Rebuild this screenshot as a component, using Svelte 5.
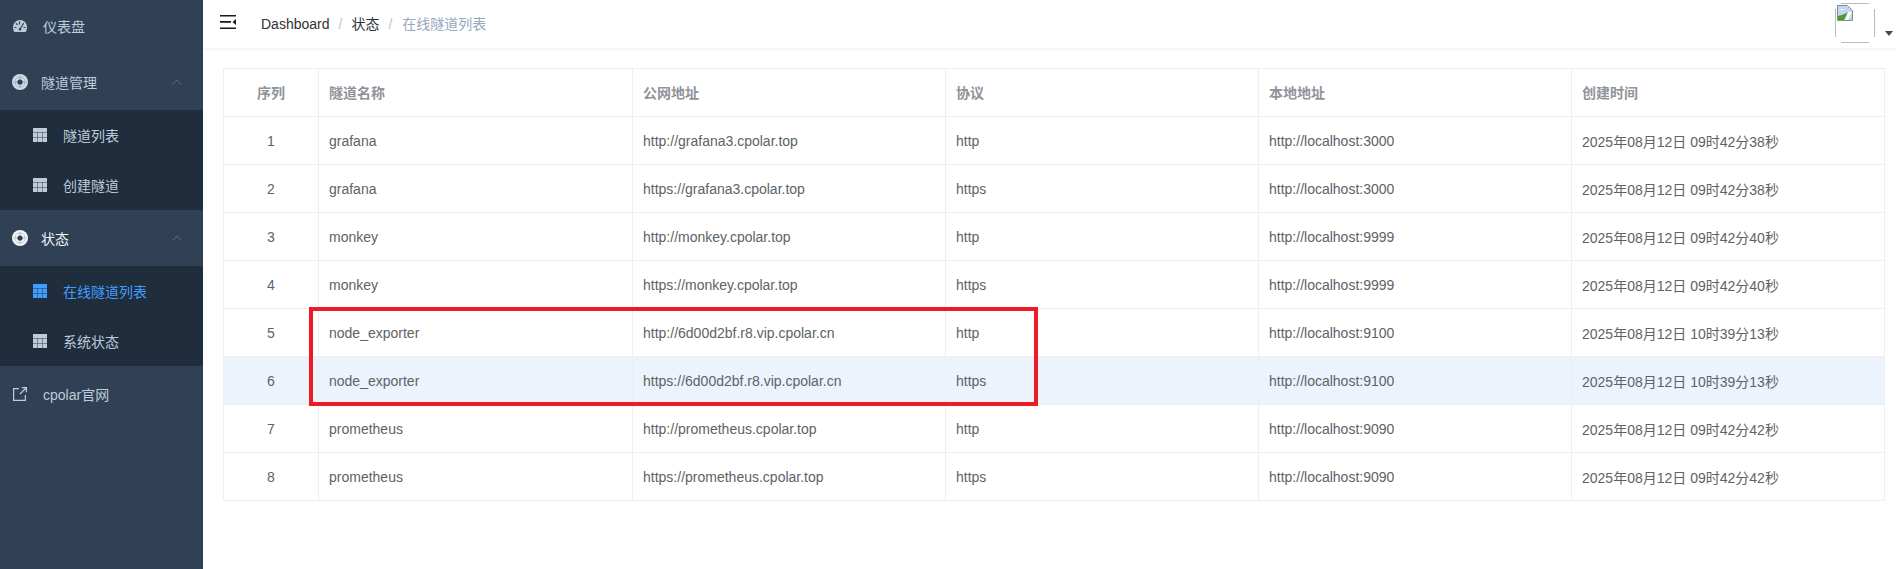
<script lang="ts">
	const rows = [
		['1', 'grafana', 'http://grafana3.cpolar.top', 'http', 'http://localhost:3000', '2025年08月12日 09时42分38秒'],
		['2', 'grafana', 'https://grafana3.cpolar.top', 'https', 'http://localhost:3000', '2025年08月12日 09时42分38秒'],
		['3', 'monkey', 'http://monkey.cpolar.top', 'http', 'http://localhost:9999', '2025年08月12日 09时42分40秒'],
		['4', 'monkey', 'https://monkey.cpolar.top', 'https', 'http://localhost:9999', '2025年08月12日 09时42分40秒'],
		['5', 'node_exporter', 'http://6d00d2bf.r8.vip.cpolar.cn', 'http', 'http://localhost:9100', '2025年08月12日 10时39分13秒'],
		['6', 'node_exporter', 'https://6d00d2bf.r8.vip.cpolar.cn', 'https', 'http://localhost:9100', '2025年08月12日 10时39分13秒'],
		['7', 'prometheus', 'http://prometheus.cpolar.top', 'http', 'http://localhost:9090', '2025年08月12日 09时42分42秒'],
		['8', 'prometheus', 'https://prometheus.cpolar.top', 'https', 'http://localhost:9090', '2025年08月12日 09时42分42秒']
	];
	const headers = ['隧道名称', '公网地址', '协议', '本地地址', '创建时间'];
</script>

{#snippet gridIcon()}
	<svg class="grid-icon" viewBox="0 0 14 14" width="14" height="14">
		<rect width="14" height="14" fill="currentColor" />
		<path stroke="#1f2d3d" stroke-opacity="0.45" d="M0 4.500h14M0 9.500h14M4.500 4v10M9.500 4v10" />
	</svg>
{/snippet}

{#snippet plusIcon()}
	<svg class="plus-icon" viewBox="0 0 16 16" width="16" height="16">
		<circle cx="8" cy="8" r="8" fill="currentColor" />
		<circle cx="8" cy="8" r="5.200" fill="none" stroke="#7fa6c9" stroke-opacity="0.5" />
		<path stroke="#304156" stroke-opacity="0.35" d="M8 2.500v11M2.500 8h11" />
		<circle cx="8" cy="8" r="2.600" fill="#304156" />
	</svg>
{/snippet}

{#snippet chevron()}
	<svg class="chevron" viewBox="0 0 10 6" width="10" height="6">
		<path fill="none" stroke="currentColor" d="M.5 5.500 5 1l4.500 4.500" />
	</svg>
{/snippet}

<div class="layout">
	<aside class="sidebar">
		<a class="menu-item" href="#/">
			<svg class="side-icon" viewBox="0 0 14 12" width="14" height="12">
				<path fill="currentColor" d="M7 0a7 7 0 0 1 7 7c0 1.800-.5 3.500-1.300 5H1.300C.5 10.500 0 8.800 0 7a7 7 0 0 1 7-7z" />
				<path stroke="#304156" stroke-width="1.200" d="M6.500 1.500v3M2.800 3.200l1.700 1.700M1.500 7.500h2M10.500 7.500h2M10.800 3 7 9" />
				<circle cx="7" cy="9.200" r="1.300" fill="#304156" />
			</svg>
			<span>仪表盘</span>
		</a>
		<div class="menu-item group">
			{@render plusIcon()}
			<span>隧道管理</span>
			{@render chevron()}
		</div>
		<div class="submenu">
			<a class="sub-item" href="#/list">{@render gridIcon()}<span>隧道列表</span></a>
			<a class="sub-item" href="#/create">{@render gridIcon()}<span>创建隧道</span></a>
		</div>
		<div class="menu-item group open">
			{@render plusIcon()}
			<span>状态</span>
			{@render chevron()}
		</div>
		<div class="submenu">
			<a class="sub-item active" href="#/online">{@render gridIcon()}<span>在线隧道列表</span></a>
			<a class="sub-item" href="#/system">{@render gridIcon()}<span>系统状态</span></a>
		</div>
		<a class="menu-item site" href="#/site">
			<svg class="side-icon" viewBox="0 0 14 14" width="14" height="14">
				<path fill="none" stroke="currentColor" stroke-width="1.200" d="M6 1.600H.6v11.800h11.800V8M7 7l6-6M8.800.6h4.600v4.600" />
			</svg>
			<span>cpolar官网</span>
		</a>
	</aside>

	<div class="main">
		<header class="navbar">
			<svg class="hamburger" viewBox="0 0 16 14" width="16" height="14">
				<path fill="#1a1a1a" d="M0 0h16v1.500H0zM0 6h11v1.800H0zM0 12.500h16V14H0zM16 4v6L12.500 7z" />
			</svg>
			<nav class="breadcrumb">
				<span>Dashboard</span>
				<i>/</i>
				<span>状态</span>
				<i>/</i>
				<span class="current">在线隧道列表</span>
			</nav>
			<div class="avatar">
				<div class="avatar-box">
					<svg viewBox="0 0 16 16" width="16" height="16">
						<path fill="#c3d6f2" stroke="#8a8a8a" d="M.5.500h10l5 5v10H.5z" />
						<path fill="#fff" d="M3 5c1-1.500 3-1.500 4 0z" />
						<path fill="#4c9a2a" d="M1 15V11c4-1 7-2 10-4l-4 8z" />
						<path fill="#fff" d="M11 7h4l-4 8H8z" />
					</svg>
				</div>
				<span class="caret"></span>
			</div>
		</header>

		<section class="content">
			<div class="table-wrap">
				<table>
					<colgroup>
						<col class="col-index" />
						<col class="col-name" />
						<col class="col-rest" />
						<col class="col-rest" />
						<col class="col-rest" />
						<col class="col-rest" />
					</colgroup>
					<thead>
						<tr>
							<th class="center">序列</th>
							{#each headers as h}
								<th>{h}</th>
							{/each}
						</tr>
					</thead>
					<tbody>
						{#each rows as row}
							<tr class:hover={row[0] === '6'}>
								{#each row as cell, i}
									<td class:center={i === 0}>{cell}</td>
								{/each}
							</tr>
						{/each}
					</tbody>
				</table>
				<div class="mark"></div>
			</div>
		</section>
	</div>
</div>

<style>
	:global(body) {
		margin: 0;
		background: #fff;
		font-family: 'Liberation Sans', 'Noto Sans CJK SC', sans-serif;
		font-size: 14px;
	}
	.layout {
		display: flex;
		height: 569px;
		overflow: hidden;
	}
	.sidebar {
		flex: 0 0 203px;
		background: #304156;
		color: #bfcbd9;
	}
	.sidebar a {
		color: inherit;
		text-decoration: none;
	}
	.menu-item {
		display: flex;
		align-items: center;
		box-sizing: border-box;
		height: 56px;
		padding-left: 13px;
		position: relative;
	}
	.menu-item:first-child {
		margin-top: -2px;
	}
	.menu-item span {
		margin-left: 16px;
	}
	.menu-item.group {
		padding-left: 12px;
	}
	.menu-item.group span {
		margin-left: 13px;
	}
	.menu-item.open span,
	.menu-item.open .plus-icon {
		color: #f4f4f5;
	}
	.menu-item.site span {
		margin-left: 16px;
	}
	.plus-icon {
		color: #cfd8e3;
	}
	.chevron {
		position: absolute;
		left: 172px;
		top: 25px;
		color: #5c6b7e;
	}
	.submenu {
		background: #1f2d3d;
	}
	.sub-item {
		display: flex;
		align-items: center;
		box-sizing: border-box;
		height: 50px;
		padding-left: 33px;
	}
	.sub-item span {
		margin-left: 16px;
	}
	.sub-item.active {
		color: #409eff;
	}
	.main {
		flex: 1;
		min-width: 0;
	}
	.navbar {
		display: flex;
		align-items: center;
		height: 48px;
		padding-left: 17px;
		box-shadow: 0 1px 4px rgba(0, 21, 41, 0.08);
		position: relative;
	}
	.hamburger {
		margin-top: -4px;
	}
	.breadcrumb {
		display: flex;
		align-items: baseline;
		margin-left: 25px;
		margin-top: -3px;
		color: #303133;
	}
	.breadcrumb i {
		font-style: normal;
		color: #c0c4cc;
		margin: 0 9px;
	}
	.breadcrumb .current {
		color: #97a8be;
		margin-left: 1px;
	}
	.avatar {
		margin-left: auto;
		margin-right: 3px;
		display: flex;
		align-items: flex-end;
		height: 40px;
		margin-top: -2px;
	}
	.avatar-box {
		box-sizing: border-box;
		width: 40px;
		height: 40px;
		padding: 2px;
		margin-right: 10px;
		background:
			linear-gradient(#bbb, #bbb) top center / 28px 1px no-repeat,
			linear-gradient(#bbb, #bbb) bottom center / 28px 1px no-repeat,
			linear-gradient(#bbb, #bbb) left center / 1px 28px no-repeat,
			linear-gradient(#bbb, #bbb) right center / 1px 28px no-repeat;
	}
	.avatar-box svg {
		display: block;
	}
	.caret {
		width: 0;
		height: 0;
		border: 4px solid transparent;
		border-top: 5px solid #3a4a5a;
		border-bottom: 0;
		margin-bottom: 7px;
	}
	.content {
		padding: 20px 12px 0 20px;
	}
	.table-wrap {
		position: relative;
	}
	table {
		width: 1662px;
		table-layout: fixed;
		border-collapse: separate;
		border-spacing: 0;
		border-top: 1px solid #ebeef5;
		border-left: 1px solid #ebeef5;
		color: #606266;
	}
	.col-index {
		width: 95px;
	}
	.col-name {
		width: 314px;
	}
	.col-rest {
		width: 313px;
	}
	th,
	td {
		height: 48px;
		padding: 0 0 0 10px;
		box-sizing: border-box;
		border-right: 1px solid #ebeef5;
		border-bottom: 1px solid #ebeef5;
		text-align: left;
		font-size: 14px;
	}
	th {
		color: #909399;
		font-weight: 700;
		padding-bottom: 2px;
	}
	.center {
		text-align: center;
		padding-left: 0;
	}
	tr.hover td {
		background: #ecf3fd;
	}
	.mark {
		position: absolute;
		left: 86px;
		top: 239px;
		width: 721px;
		height: 91px;
		border: 4px solid #ed1c24;
	}
</style>
